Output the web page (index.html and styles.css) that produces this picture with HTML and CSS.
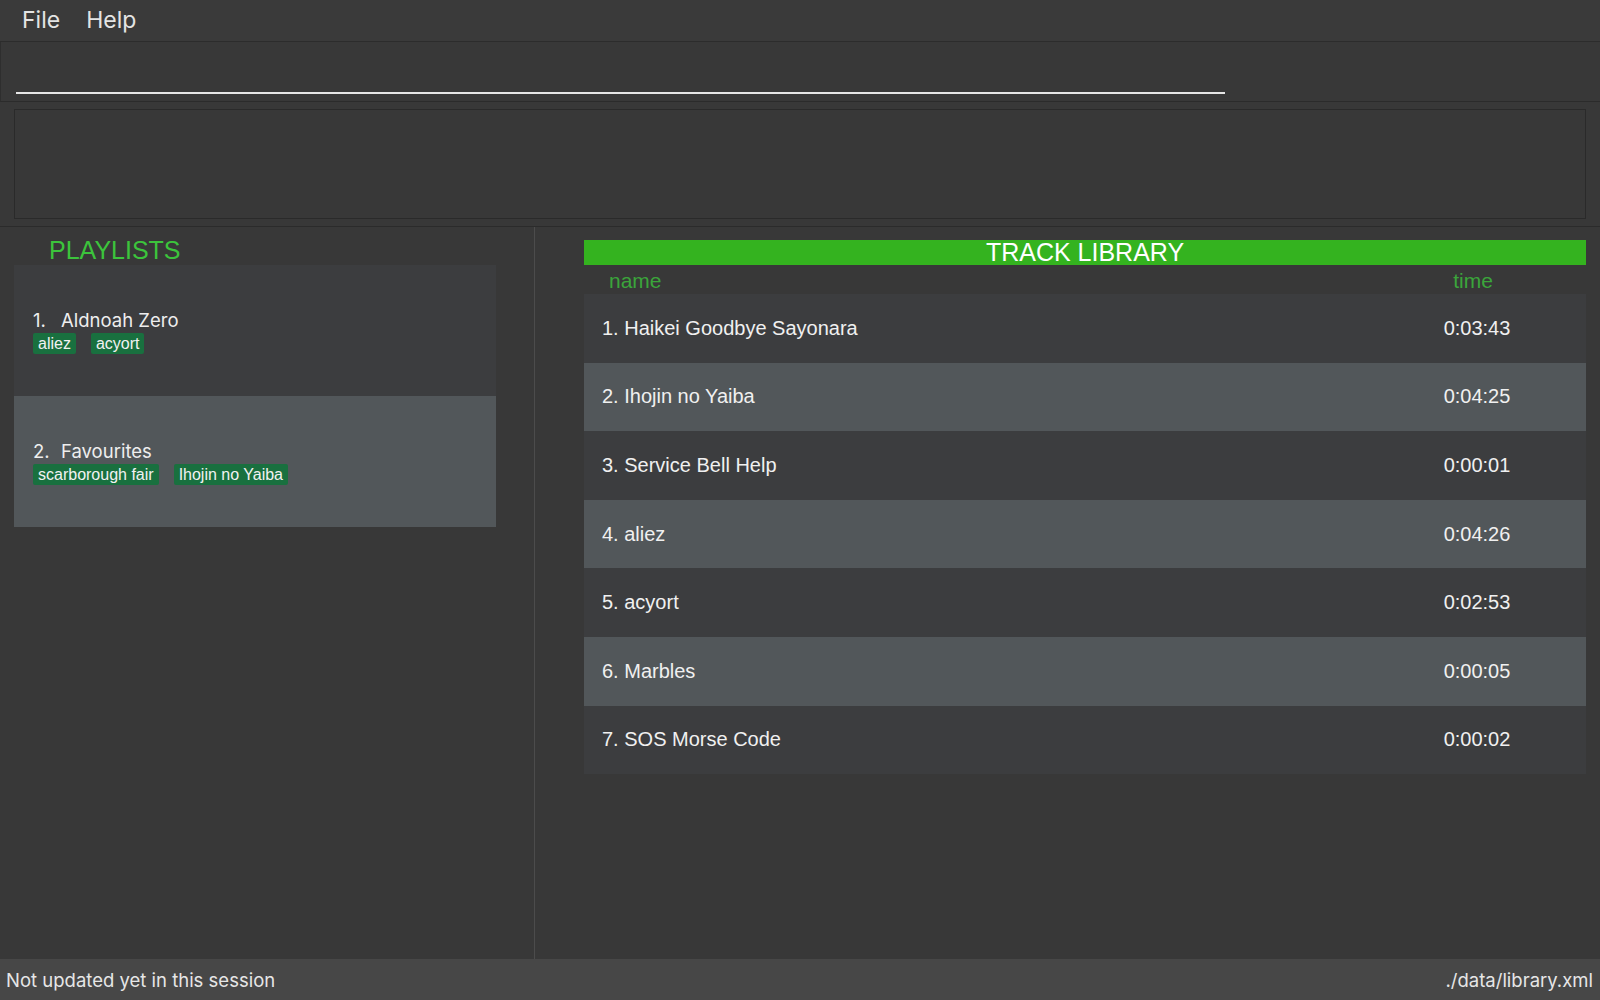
FILE: index.html
```html
<!DOCTYPE html>
<html>
<head>
<meta charset="utf-8">
<link rel="stylesheet" href="styles.css">
</head>
<body>
<div class="app">
  <div class="menubar">
    <span class="menu-item">File</span>
    <span class="menu-item">Help</span>
  </div>
  <div class="command">
    <div class="command-input"></div>
  </div>
  <div class="result">
    <div class="result-box"></div>
  </div>
  <div class="main">
    <div class="left">
      <div class="left-title">PLAYLISTS</div>
      <div class="card">
        <div class="card-title"><span class="card-index">1.</span><span>Aldnoah Zero</span></div>
        <div class="tags"><span class="tag">aliez</span><span class="tag">acyort</span></div>
      </div>
      <div class="card alt">
        <div class="card-title"><span class="card-index">2.</span><span>Favourites</span></div>
        <div class="tags"><span class="tag">scarborough fair</span><span class="tag">Ihojin no Yaiba</span></div>
      </div>
    </div>
    <div class="right">
      <div class="lib-title">TRACK LIBRARY</div>
      <div class="lib-head">
        <span class="col-name">name</span>
        <span class="col-time">time</span>
      </div>
      <div class="row"><span class="col-name">1. Haikei Goodbye Sayonara</span><span class="col-time">0:03:43</span></div>
      <div class="row alt"><span class="col-name">2. Ihojin no Yaiba</span><span class="col-time">0:04:25</span></div>
      <div class="row"><span class="col-name">3. Service Bell Help</span><span class="col-time">0:00:01</span></div>
      <div class="row alt"><span class="col-name">4. aliez</span><span class="col-time">0:04:26</span></div>
      <div class="row"><span class="col-name">5. acyort</span><span class="col-time">0:02:53</span></div>
      <div class="row alt"><span class="col-name">6. Marbles</span><span class="col-time">0:00:05</span></div>
      <div class="row"><span class="col-name">7. SOS Morse Code</span><span class="col-time">0:00:02</span></div>
    </div>
  </div>
  <div class="status">
    <span>Not updated yet in this session</span>
    <span>./data/library.xml</span>
  </div>
</div>
</body>
</html>
```
FILE: styles.css
```css
html, body {
  margin: 0;
  padding: 0;
  background: #383838;
}
.app {
  width: 1600px;
  height: 1000px;
  display: flex;
  flex-direction: column;
  background: #383838;
  font-family: Inter, "Liberation Sans", sans-serif;
  color: #e8e8e8;
}
.menubar {
  height: 42px;
  flex: none;
  display: flex;
  align-items: center;
  gap: 26px;
  padding-left: 22px;
  padding-bottom: 1px;
  background: #3a3a3a;
  border-bottom: 1px solid #2c2c2c;
  box-sizing: border-box;
}
.menu-item {
  font-size: 23px;
  color: #e4e4e4;
}
.command {
  height: 60px;
  flex: none;
  box-sizing: border-box;
  padding: 0 0 0 15px;
  border-bottom: 1px solid #2b2b2b;
  border-left: 1px solid #2e2e2e;
  display: flex;
  flex-direction: column;
}
.command-input {
  width: 1209px;
  height: 50px;
  border-bottom: 2px solid #e6e6e6;
}
.result {
  height: 125px;
  flex: none;
  box-sizing: border-box;
  padding: 7px 14px 7px 14px;
  border-bottom: 1px solid #2b2b2b;
}
.result-box {
  height: 100%;
  box-sizing: border-box;
  border: 1px solid #2a2a2a;
  background: #383838;
}
.main {
  flex: 1;
  display: flex;
  min-height: 0;
}
.left {
  width: 535px;
  flex: none;
  border-right: 1px solid #4c4c4c;
  box-sizing: border-box;
  padding-left: 14px;
}
.left-title {
  height: 34px;
  padding-top: 4px;
  padding-left: 35px;
  font-family: "Liberation Sans", Arial, sans-serif;
  font-size: 25px;
  line-height: 38px;
  color: #3cc43c;
}
.card {
  width: 482px;
  height: 131px;
  background: #3c3d3f;
  box-sizing: border-box;
  padding-left: 19px;
  padding-top: 2px;
  display: flex;
  flex-direction: column;
  justify-content: center;
  gap: 2px;
}
.card.alt {
  background: #52575a;
}
.card-title {
  font-size: 18.5px;
  color: #eeeeee;
  display: flex;
}
.card-index {
  width: 28px;
}
.tags {
  display: flex;
  gap: 15px;
}
.tag {
  font-family: "Liberation Sans", Arial, sans-serif;
  font-size: 16px;
  line-height: 21px;
  padding: 0 5px;
  background: #19703f;
  color: #f2f2f2;
  border-radius: 2px;
}
.right {
  flex: 1;
  padding: 13px 14px 0 49px;
  font-family: "Liberation Sans", Arial, sans-serif;
}
.lib-title {
  height: 25px;
  background: #34b31f;
  color: #ffffff;
  font-size: 25px;
  line-height: 25px;
  text-align: center;
}
.lib-head {
  height: 29px;
  display: flex;
  align-items: center;
  color: #3ba53b;
  font-size: 21px;
  padding-right: 49px;
  padding-top: 2px;
  box-sizing: border-box;
}
.lib-head .col-name {
  flex: 1;
  padding-left: 25px;
}
.lib-head .col-time {
  box-sizing: border-box;
  padding-right: 8px;
}
.col-time {
  width: 120px;
  text-align: center;
}
.row {
  height: 68.6px;
  display: flex;
  align-items: center;
  background: #3c3d3f;
  font-size: 20px;
  color: #f0f0f0;
  padding-right: 49px;
}
.row.alt {
  background: #52575a;
}
.row .col-name {
  flex: 1;
  padding-left: 18px;
}
.status {
  height: 41px;
  flex: none;
  background: #474747;
  display: flex;
  align-items: center;
  justify-content: space-between;
  padding: 0 7px 0 6px;
  font-size: 18.5px;
  color: #e6e6e6;
}
```
